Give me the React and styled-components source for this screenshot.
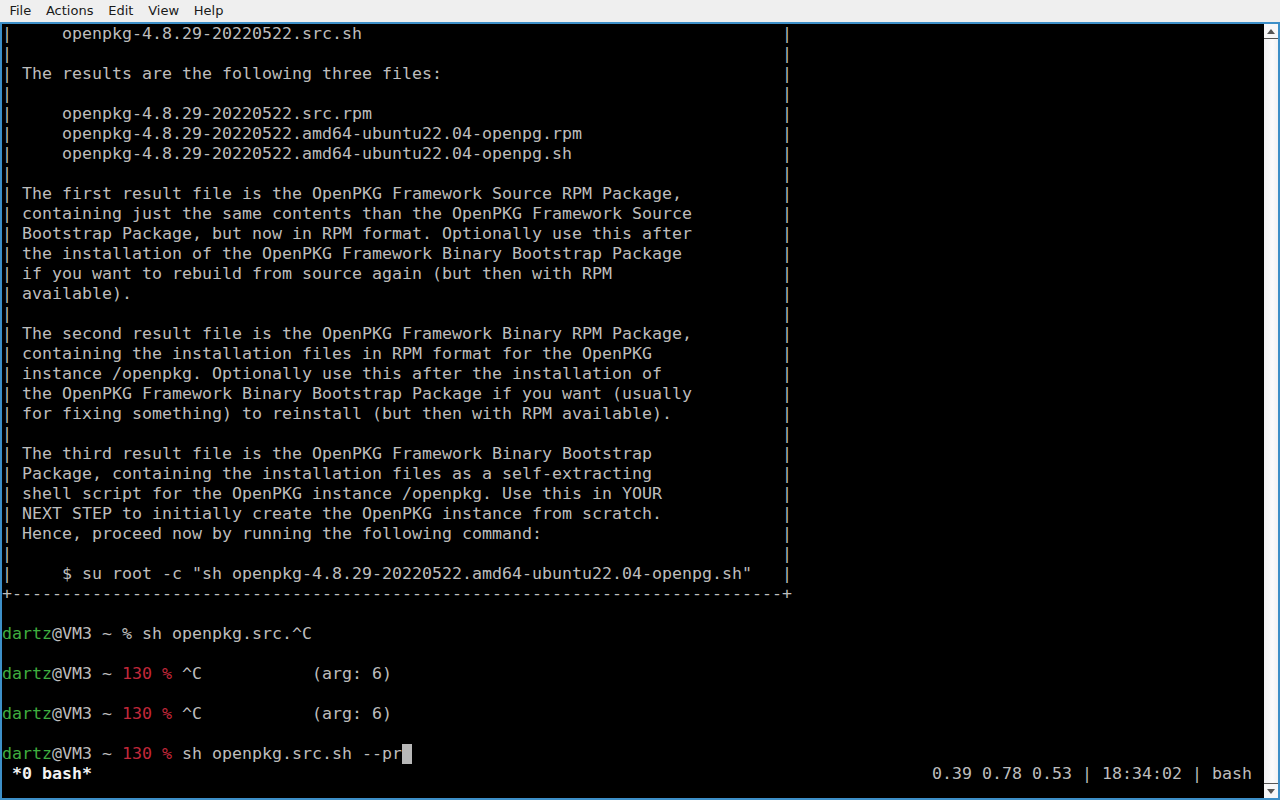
import React from "react";
import styled, { createGlobalStyle } from "styled-components";

const GlobalStyle = createGlobalStyle`
  html, body {
    margin: 0;
    padding: 0;
    background: #efefef;
    overflow: hidden;
  }
`;

const Window = styled.div`
  width: 1280px;
  height: 800px;
  display: flex;
  flex-direction: column;
  background: #efefef;
`;

const MenuBar = styled.div`
  height: 22px;
  display: flex;
  align-items: center;
  padding-left: 2px;
  font-family: "DejaVu Sans", "Liberation Sans", sans-serif;
  font-size: 13px;
  color: #1a1a1a;
`;

const MenuItem = styled.span`
  padding: 0 7.4px;
  line-height: 22px;
`;

const Frame = styled.div`
  flex: 1;
  display: flex;
  border: 2px solid #3d8fc8;
  min-height: 0;
`;

const Screen = styled.div`
  flex: 1;
  background: #000;
  font-family: "DejaVu Sans Mono", "Liberation Mono", monospace;
  font-size: 16.61px;
  color: #bdbdbd;
  overflow: hidden;
`;

const Line = styled.div`
  height: 20px;
  line-height: 20px;
  white-space: pre;
`;

const Tab = styled.span`
  font-weight: bold;
  color: #f2f2f2;
`;

const User = styled.span`
  color: #3fae3f;
`;

const Err = styled.span`
  color: #c2283a;
`;

const Cursor = styled.span`
  display: inline-block;
  width: 10px;
  height: 20px;
  vertical-align: top;
  background: #b8b8b8;
`;

const Scrollbar = styled.div`
  width: 14px;
  display: flex;
  flex-direction: column;
  background: linear-gradient(to right, #f0f0f2, #fbfbfc 60%, #f2f2f4);
`;

const ArrowBox = styled.div`
  height: 14px;
  display: flex;
  align-items: center;
  justify-content: center;
  background: #f7f7f8;
  border-${(p) => (p.$up ? "bottom" : "top")}: 1px solid #555;
`;

const Track = styled.div`
  flex: 1;
`;

const Arrow = ({ up }) => (
  <ArrowBox $up={up}>
    <svg width="8" height="5" viewBox="0 0 8 5">
      <path d={up ? "M0 5 L4 0 L8 5 Z" : "M0 0 L4 5 L8 0 Z"} fill="#555" />
    </svg>
  </ArrowBox>
);

const box = (s) => ("|" + s).padEnd(78) + "|";

const boxLines = [
  "     openpkg-4.8.29-20220522.src.sh",
  "",
  " The results are the following three files:",
  "",
  "     openpkg-4.8.29-20220522.src.rpm",
  "     openpkg-4.8.29-20220522.amd64-ubuntu22.04-openpg.rpm",
  "     openpkg-4.8.29-20220522.amd64-ubuntu22.04-openpg.sh",
  "",
  " The first result file is the OpenPKG Framework Source RPM Package,",
  " containing just the same contents than the OpenPKG Framework Source",
  " Bootstrap Package, but now in RPM format. Optionally use this after",
  " the installation of the OpenPKG Framework Binary Bootstrap Package",
  " if you want to rebuild from source again (but then with RPM",
  " available).",
  "",
  " The second result file is the OpenPKG Framework Binary RPM Package,",
  " containing the installation files in RPM format for the OpenPKG",
  " instance /openpkg. Optionally use this after the installation of",
  " the OpenPKG Framework Binary Bootstrap Package if you want (usually",
  " for fixing something) to reinstall (but then with RPM available).",
  "",
  " The third result file is the OpenPKG Framework Binary Bootstrap",
  " Package, containing the installation files as a self-extracting",
  " shell script for the OpenPKG instance /openpkg. Use this in YOUR",
  " NEXT STEP to initially create the OpenPKG instance from scratch.",
  " Hence, proceed now by running the following command:",
  "",
  '     $ su root -c "sh openpkg-4.8.29-20220522.amd64-ubuntu22.04-openpg.sh"',
];

const Prompt = ({ code, children }) => (
  <Line>
    <User>dartz</User>@VM3 ~ {code ? <Err>{code} %</Err> : "%"} {children}
  </Line>
);

const tabLabel = " *0 bash*";
const statusRight = "0.39 0.78 0.53 | 18:34:02 | bash";

export default function App() {
  return (
    <>
      <GlobalStyle />
      <Window>
        <MenuBar>
          {["File", "Actions", "Edit", "View", "Help"].map((m) => (
            <MenuItem key={m}>{m}</MenuItem>
          ))}
        </MenuBar>
        <Frame>
          <Screen>
            {boxLines.map((l, i) => (
              <Line key={i}>{box(l)}</Line>
            ))}
            <Line>{"+" + "-".repeat(77) + "+"}</Line>
            <Line />
            <Prompt>sh openpkg.src.^C</Prompt>
            <Line />
            <Prompt code="130">{"^C           (arg: 6)"}</Prompt>
            <Line />
            <Prompt code="130">{"^C           (arg: 6)"}</Prompt>
            <Line />
            <Prompt code="130">
              sh openpkg.src.sh --pr<Cursor />
            </Prompt>
            <Line>
              <Tab>{tabLabel}</Tab>
              {" ".repeat(93 - tabLabel.length) + statusRight}
            </Line>
          </Screen>
          <Scrollbar>
            <Arrow up />
            <Track />
            <Arrow />
          </Scrollbar>
        </Frame>
      </Window>
    </>
  );
}
